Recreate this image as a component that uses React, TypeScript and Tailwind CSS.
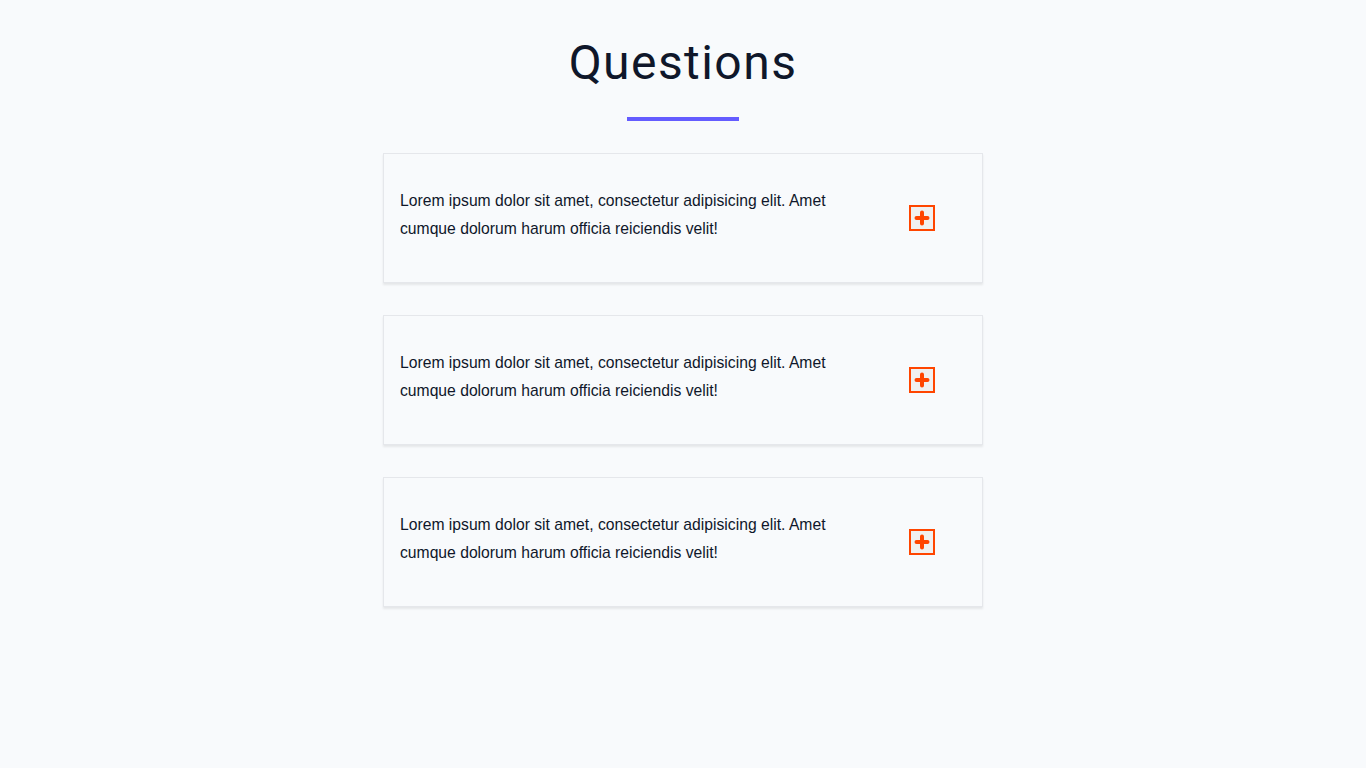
import { useState } from "react";

const questions = [
  {
    id: 1,
    title:
      "Lorem ipsum dolor sit amet, consectetur adipisicing elit. Amet cumque dolorum harum officia reiciendis velit!",
    info: "Lorem ipsum dolor sit amet consectetur adipisicing elit. Quasi, unde.",
  },
  {
    id: 2,
    title:
      "Lorem ipsum dolor sit amet, consectetur adipisicing elit. Amet cumque dolorum harum officia reiciendis velit!",
    info: "Lorem ipsum dolor sit amet consectetur adipisicing elit. Quasi, unde.",
  },
  {
    id: 3,
    title:
      "Lorem ipsum dolor sit amet, consectetur adipisicing elit. Amet cumque dolorum harum officia reiciendis velit!",
    info: "Lorem ipsum dolor sit amet consectetur adipisicing elit. Quasi, unde.",
  },
];

function PlusIcon() {
  return (
    <svg width="16" height="16" viewBox="0 0 16 16">
      <path
        d="M8 2.5v11M2.5 8h11"
        stroke="#ff4500"
        strokeWidth="4"
        strokeLinecap="round"
      />
    </svg>
  );
}

function Question({ title, info }: { title: string; info: string }) {
  const [open, setOpen] = useState(false);
  return (
    <article className="w-[600px] border border-[#e5e7eb] bg-[#f8fafc] shadow-[0_2px_2px_rgba(0,0,0,0.08)]">
      <header className="flex h-[128px] items-center justify-between pl-4 pr-[47px]">
        <p className="w-[440px] pb-1.5 font-['Liberation_Sans',Arial,sans-serif] text-[15.7px] leading-7 text-[#0f172a]">
          {title}
        </p>
        <button
          className="flex h-[26px] w-[26px] items-center justify-center border-2 border-[#ff4500] bg-[#f0f0f0]"
          onClick={() => setOpen(!open)}
        >
          <PlusIcon />
        </button>
      </header>
      {open && (
        <p className="px-4 pb-6 font-['Liberation_Sans',Arial,sans-serif] text-[15.7px] text-[#334155]">
          {info}
        </p>
      )}
    </article>
  );
}

export default function App() {
  return (
    <main className="min-h-screen bg-[#f8fafc] pt-[39px]">
      <div className="flex flex-col items-center">
        <h1 className="font-['Roboto',sans-serif] text-5xl leading-[48px] tracking-[0.03em] text-[#0f172a]">
          Questions
        </h1>
        <div className="mt-[30px] h-1 w-[112px] bg-[#645cff]"></div>
        <section className="mt-8 flex flex-col gap-8">
          {questions.map((q) => (
            <Question key={q.id} title={q.title} info={q.info} />
          ))}
        </section>
      </div>
    </main>
  );
}
